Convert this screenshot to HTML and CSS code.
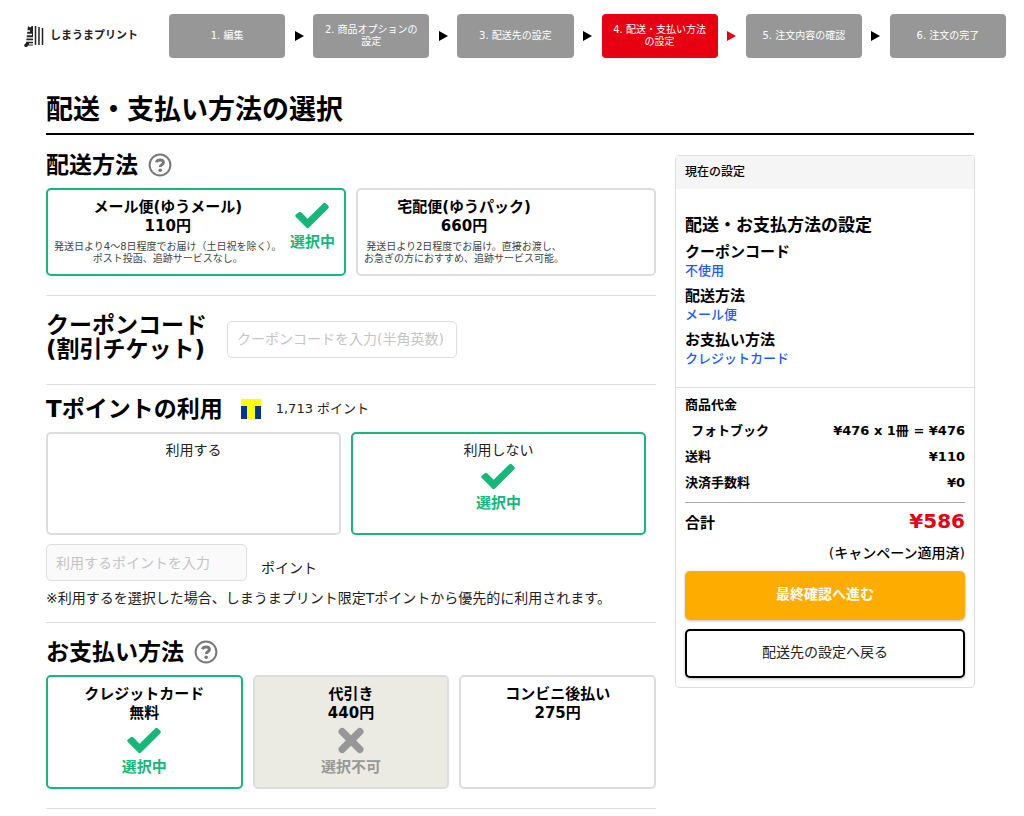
FILE: index.html
```html
<!DOCTYPE html>
<html lang="ja">
<head>
<meta charset="utf-8">
<meta name="viewport" content="width=device-width, initial-scale=1">
<title>配送・支払い方法の選択</title>
<link rel="stylesheet" href="styles.css">
</head>
<body>
<svg class="defs" aria-hidden="true">
  <symbol id="check" viewBox="0 0 36 28"><path d="M1 13.200Q0 14.300 1 15.400L12.300 26.600Q13.500 27.600 14.700 26.600L35 6.400Q36 5.200 35 4L32.200 1.200Q31 .2 29.800 1.200L13.500 17.400L6.700 10.600Q5.500 9.600 4.300 10.600Z" fill="currentColor"/></symbol>
  <symbol id="cross" viewBox="0 0 26 26"><path d="M4.500 4.500L21.500 21.500M21.500 4.500L4.500 21.500" fill="none" stroke="currentColor" stroke-width="7" stroke-linecap="round"/></symbol>
  <symbol id="help" viewBox="0 0 24 24"><circle cx="12" cy="12" r="10.400" fill="none" stroke="currentColor" stroke-width="2"/><path d="M8.400 9.300C9 7.600 10.200 6.900 12 6.900C14 6.900 15.400 7.900 15.400 9.500C15.400 11.800 12.200 11.700 12.200 14" fill="none" stroke="currentColor" stroke-width="3"/><circle cx="12.200" cy="17.200" r="1.800" fill="currentColor"/></symbol>
</svg>

<header class="header">
  <a class="logo" href="#">
    <svg class="logo-mark" viewBox="0 0 20 22" aria-hidden="true"><path d="M4 1l2 1.500L8 1h1v19.500H4L3 22H1l-1-2 2-2z" fill="#222"/><path d="M1 6h5M1 9.500h7M1 12.800h8M1 16h8M5 18.800h4" stroke="#fff" stroke-width="1.300"/><path d="M11.500 1v19M15 2v18M18.500 3v17" stroke="#222" stroke-width="1.500"/></svg>
    <span>しまうまプリント</span>
  </a>
  <ol class="steps">
    <li class="step">1. 編集</li>
    <li class="arrow" aria-hidden="true"></li>
    <li class="step">2. 商品オプションの設定</li>
    <li class="arrow" aria-hidden="true"></li>
    <li class="step">3. 配送先の設定</li>
    <li class="arrow" aria-hidden="true"></li>
    <li class="step step-current" aria-current="step">4. 配送・支払い方法<br>の設定</li>
    <li class="arrow arrow-current" aria-hidden="true"></li>
    <li class="step">5. 注文内容の確認</li>
    <li class="arrow" aria-hidden="true"></li>
    <li class="step">6. 注文の完了</li>
  </ol>
</header>

<div class="page">
  <h1 class="title">配送・支払い方法の選択</h1>
  <div class="columns">
    <main>
      <section class="section">
        <h2 class="heading">配送方法 <svg class="help"><use href="#help"/></svg></h2>
        <div class="options options-two options-shipping">
          <label class="card card-side selected">
            <input class="radio" type="radio" name="shipping" checked>
            <span class="card-text"><span class="name">メール便(ゆうメール)<br>110円</span><span class="desc">発送日より4～8日程度でお届け（土日祝を除く）。<br>ポスト投函、追跡サービスなし。</span></span>
            <span class="mark"><svg class="check"><use href="#check"/></svg>選択中</span>
          </label>
          <label class="card card-side">
            <input class="radio" type="radio" name="shipping">
            <span class="card-text"><span class="name">宅配便(ゆうパック)<br>660円</span><span class="desc">発送日より2日程度でお届け。直接お渡し、<br>お急ぎの方におすすめ、追跡サービス可能。</span></span>
          </label>
        </div>
      </section>

      <section class="section coupon">
        <h2 class="heading"><label for="coupon">クーポンコード<br>(割引チケット)</label></h2>
        <input class="field coupon-field" id="coupon" type="text" placeholder="クーポンコードを入力(半角英数)">
      </section>

      <section class="section points">
        <h2 class="heading">Tポイントの利用
          <svg class="t-logo" viewBox="0 0 20 20" aria-hidden="true"><path d="M0 0h20v20H0z" fill="#ff0"/><path d="M0 7h6v13H0zM14 7h6v13h-6z" fill="#003399"/></svg>
          <span class="balance">1,713 ポイント</span>
        </h2>
        <div class="options options-two options-points">
          <label class="card card-points"><input class="radio" type="radio" name="points"><span>利用する</span></label>
          <label class="card card-points selected"><input class="radio" type="radio" name="points" checked><span>利用しない</span><span class="mark"><svg class="check"><use href="#check"/></svg>選択中</span></label>
        </div>
        <div class="point-row">
          <input class="field point-field" id="use-points" type="text" placeholder="利用するポイントを入力" disabled>
          <label class="unit" for="use-points">ポイント</label>
        </div>
        <p class="note">※利用するを選択した場合、しまうまプリント限定Tポイントから優先的に利用されます。</p>
      </section>

      <section class="section">
        <h2 class="heading">お支払い方法 <svg class="help"><use href="#help"/></svg></h2>
        <div class="options options-three">
          <label class="card card-pay selected"><input class="radio" type="radio" name="payment" checked><span class="name">クレジットカード<br>無料</span><span class="mark"><svg class="check"><use href="#check"/></svg>選択中</span></label>
          <label class="card card-pay disabled"><input class="radio" type="radio" name="payment" disabled><span class="name">代引き<br>440円</span><span class="mark"><svg class="check"><use href="#cross"/></svg>選択不可</span></label>
          <label class="card card-pay"><input class="radio" type="radio" name="payment"><span class="name">コンビニ後払い<br>275円</span></label>
        </div>
      </section>
    </main>

    <aside class="summary">
      <h2 class="summary-head">現在の設定</h2>
      <div class="settings">
        <h3 class="settings-title">配送・お支払方法の設定</h3>
        <dl class="list">
          <dt>クーポンコード</dt><dd>不使用</dd>
          <dt>配送方法</dt><dd>メール便</dd>
          <dt>お支払い方法</dt><dd>クレジットカード</dd>
        </dl>
      </div>
      <div class="costs">
        <div class="row"><span>商品代金</span></div>
        <div class="row"><span class="item">フォトブック</span><span>¥476 x 1冊 = ¥476</span></div>
        <div class="row"><span>送料</span><span>¥110</span></div>
        <div class="row"><span>決済手数料</span><span>¥0</span></div>
        <div class="total"><span>合計</span><strong class="price">¥586</strong></div>
        <p class="campaign">(キャンペーン適用済)</p>
        <button class="button button-next" type="button">最終確認へ進む</button>
        <button class="button button-back" type="button">配送先の設定へ戻る</button>
      </div>
    </aside>
  </div>
</div>
</body>
</html>
```

FILE: styles.css
```css
* { box-sizing: border-box; }
body, h1, h2, h3, p, dl, dd, ol { margin: 0; }
body {
  background: #fff;
  color: #222;
  font: 14px/18px "DejaVu Sans", "Noto Sans CJK JP", sans-serif;
}
input, button { font: inherit; }
svg { flex: none; }
.defs { position: absolute; width: 0; height: 0; }

.header { display: flex; align-items: center; padding: 14px 18px 0 24px; }
.logo {
  display: flex;
  flex: none;
  align-items: center;
  gap: 6px;
  width: 145px;
  color: #222;
  font-size: 11px;
  font-weight: bold;
  text-decoration: none;
  white-space: nowrap;
}
.logo-mark { width: 20px; height: 22px; }
.steps { display: flex; flex: 1; padding: 0; list-style: none; }
.step {
  display: flex;
  flex: 1;
  align-items: center;
  justify-content: center;
  min-width: 0;
  height: 44px;
  padding: 0 10px;
  border-radius: 4px;
  background: #979797;
  color: #fff;
  font-size: 10px;
  line-height: 12px;
  text-align: center;
}
.step-current { background: #e60012; }
.arrow { display: flex; flex: none; align-items: center; justify-content: center; width: 28px; color: #000; }
.arrow::before {
  content: "";
  border: solid transparent;
  border-width: 5px 0 5px 9px;
  border-left-color: currentColor;
}
.arrow-current { color: #e60012; }

.page { padding: 33px 50px 0 46px; }
.title {
  padding-bottom: 4px;
  border-bottom: 2px solid #000;
  color: #000;
  font-size: 27px;
  line-height: 38px;
}
.columns {
  display: grid;
  grid-template-columns: minmax(0, 1fr) 300px;
  align-items: start;
  gap: 19px;
  margin-right: -1px;
  padding-top: 20px;
}
.section { padding-bottom: 19px; border-bottom: 1px solid #ddd; }
.section + .section { padding-top: 17px; }
.heading {
  display: flex;
  align-items: center;
  gap: 10px;
  color: #000;
  font-size: 23px;
  line-height: 24px;
}
.help { width: 24px; height: 24px; color: #777; }

.options { display: grid; gap: 10px; padding-top: 11px; }
.options-two { grid-template-columns: 1fr 1fr; }
.options-three { grid-template-columns: 1fr 1fr 1fr; }
main > .section:first-child { margin-top: -2px; }
.card {
  position: relative;
  display: flex;
  flex-direction: column;
  align-items: center;
  border: 2px solid #ddd;
  border-radius: 5px;
  text-align: center;
}
.selected { border-color: #15b77a; }
.disabled { background: #ebebe3; }
.radio { position: absolute; width: 1px; height: 1px; margin: 0; opacity: 0; }
.name { display: block; color: #000; font-size: 15px; font-weight: bold; line-height: 19px; }
.desc { display: block; padding-top: 5px; color: #444; font-size: 10px; line-height: 12px; }
.card-side {
  flex-direction: row;
  align-items: flex-start;
  justify-content: space-between;
  height: 88px;
  padding: 8px 9px 0 6px;
  white-space: nowrap;
}
.mark {
  display: flex;
  flex-direction: column;
  align-items: center;
  gap: 3px;
  padding-top: 4px;
  color: #15b77a;
  font-size: 15px;
  font-weight: bold;
  line-height: 20px;
}
.disabled .mark { color: #979797; }
.check { width: 36px; height: 27px; }

.coupon { display: flex; align-items: center; gap: 20px; height: 89px; }
.coupon.section { padding: 0 0 2px; }
.coupon .heading { padding-bottom: 4px; }
.field {
  height: 37px;
  padding: 0 9px;
  border: 1px solid #ddd;
  border-radius: 5px;
  background: #fff;
  color: #222;
}
.field:disabled { background: #fafafa; }
.field::placeholder { color: #c4c4c4; opacity: 1; }
.coupon-field { width: 230px; }

.points.section { padding-top: 12px; padding-bottom: 15px; }
.t-logo { width: 20px; height: 20px; margin-left: 8px; }
.balance { margin-left: 5px; color: #222; font-size: 13px; font-weight: normal; }
.options-points { padding-right: 10px; }
.card-points { height: 103px; padding-top: 7px; }
.point-row { display: flex; align-items: flex-end; gap: 14px; padding-top: 9px; }
.point-field { width: 201px; }
.unit { padding-bottom: 4px; }
.note { padding-top: 8px; }
.card-pay { height: 114px; padding-top: 8px; }

.summary { border: 1px solid #ddd; border-radius: 4px; color: #000; }
.summary-head {
  padding: 0 9px;
  background: #f5f5f5;
  font-size: 12px;
  font-weight: 500;
  line-height: 33px;
}
.settings { padding: 23px 9px 13px; border-bottom: 1px solid #ddd; }
.settings-title { font-size: 17px; line-height: 26px; }
.list { padding-top: 4px; }
.list dt { font-size: 15px; font-weight: bold; line-height: 20px; }
.list dd { padding-bottom: 7px; color: #1a5cff; font-size: 13px; font-weight: 500; line-height: 17px; }
.costs { padding: 4px 9px 9px; }
.row { display: flex; justify-content: space-between; font-size: 13px; font-weight: bold; line-height: 26px; }
.item { padding-left: 6px; }
.total {
  display: flex;
  align-items: flex-start;
  justify-content: space-between;
  margin-top: 6px;
  border-top: 1px solid #aaa;
  font-size: 15px;
  font-weight: bold;
  line-height: 41px;
}
.price { color: #e60012; font-size: 20px; line-height: 37px; }
.campaign { font-weight: 500; line-height: 18px; text-align: right; }
.button {
  display: block;
  width: 100%;
  height: 49px;
  margin-top: 9px;
  padding: 0 0 4px;
  border: 0;
  border-radius: 5px;
  box-shadow: 0 1px 3px #0004;
}
.button-next { background: #ffac00; color: #fff; font-weight: bold; }
.button-back { border: 2px solid #000; background: #fff; color: #222; }
```
